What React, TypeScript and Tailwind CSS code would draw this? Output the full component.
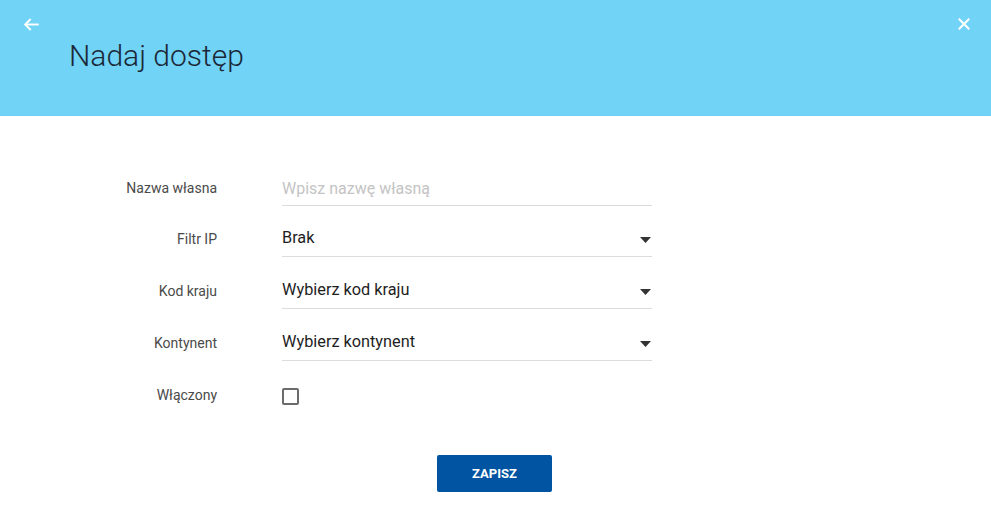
import React from "react";

function Caret() {
  return (
    <svg width="11" height="6" viewBox="0 0 11 6" className="shrink-0">
      <path d="M0 0 L11 0 L5.5 6 Z" fill="#333" />
    </svg>
  );
}

function Row({ label, children, h = "h-[52px]" }: { label: string; children: React.ReactNode; h?: string }) {
  return (
    <div className={`flex ${h} items-center`}>
      <div className="w-[217px] pb-[2px] text-right text-[14px] text-[#4a4a4a]">{label}</div>
      <div className="ml-[65px] w-[370px]">{children}</div>
    </div>
  );
}

function Select({ value }: { value: string }) {
  return (
    <div className="flex h-[33px] items-center justify-between border-b border-[#dcdcdc] pr-[1px]">
      <span className="pb-[2px] text-[16.3px] font-normal text-[#1e1e1e]">{value}</span>
      <Caret />
    </div>
  );
}

export default function App() {
  return (
    <div className="min-h-[512px] bg-white" style={{ fontFamily: "Roboto, 'Noto Sans', sans-serif" }}>
      <div className="relative h-[116px] bg-[#71d3f5]">
        <button className="absolute left-[22px] top-[15px] text-white">
          <svg width="19" height="19" viewBox="0 0 24 24" fill="none" stroke="white" strokeWidth="2.4" strokeLinecap="square">
            <path d="M20 12H5" />
            <path d="M11 5l-7 7 7 7" strokeLinecap="butt" />
          </svg>
        </button>
        <button className="absolute right-[18px] top-[15px]">
          <svg width="18" height="18" viewBox="0 0 24 24" fill="none" stroke="white" strokeWidth="2.6">
            <path d="M5 5l14 14M19 5L5 19" />
          </svg>
        </button>
        <h1 className="absolute left-[69px] top-[36px] text-[30px] font-light leading-[40px] text-[#1b2838]">
          Nadaj dostęp
        </h1>
      </div>
      <div className="pt-[48px]">
        <Row label="Nazwa własna" h="h-[50px]">
          <div className="flex h-[34px] items-center border-b border-[#dcdcdc]">
            <span className="text-[16px] text-[#c4c4c4]">Wpisz nazwę własną</span>
          </div>
        </Row>
        <Row label="Filtr IP">
          <Select value="Brak" />
        </Row>
        <Row label="Kod kraju">
          <Select value="Wybierz kod kraju" />
        </Row>
        <Row label="Kontynent">
          <Select value="Wybierz kontynent" />
        </Row>
        <Row label="Włączony">
          <div className="h-[17px] w-[17px] rounded-[2px] border-2 border-[#6b6b6b]" />
        </Row>
        <div className="mt-[33px] flex justify-center pr-[2px]">
          <button className="h-[37px] w-[115px] rounded-[2px] bg-[#0054a1] text-[13px] font-bold text-white">
            ZAPISZ
          </button>
        </div>
      </div>
    </div>
  );
}
